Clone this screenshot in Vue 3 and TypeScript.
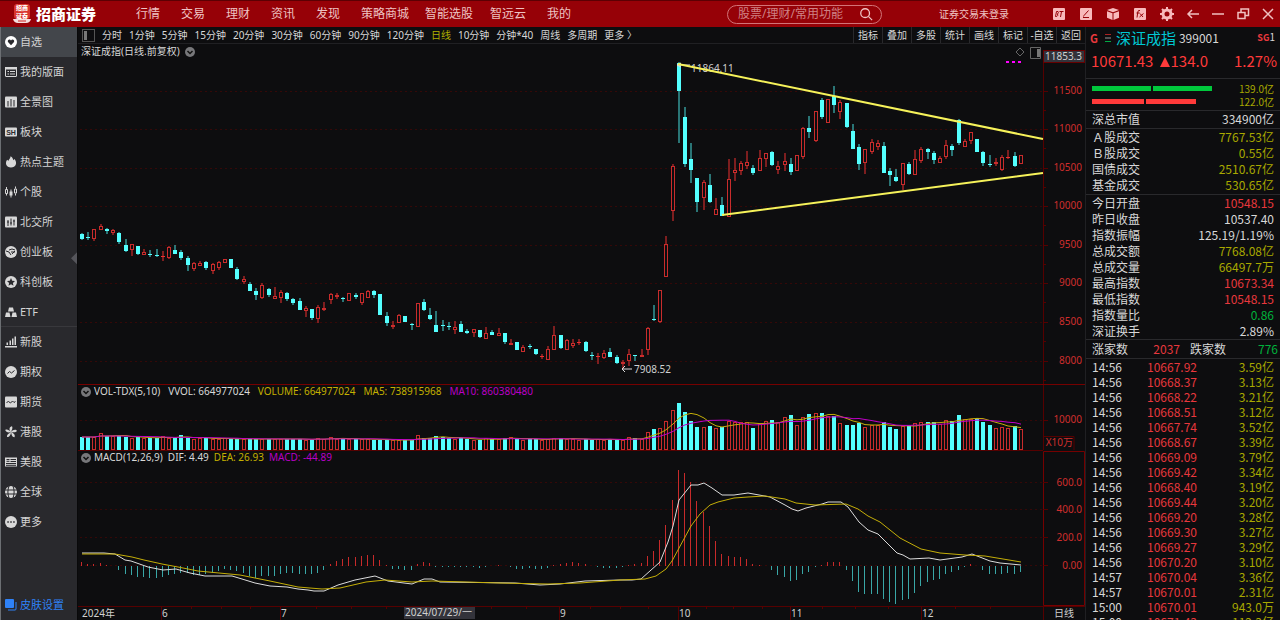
<script setup lang="ts">
type Candle = [up: number, high: number, top: number, bottom: number, low: number]
type Point = [number, number]
interface Shape { d: string; k: 'f' | 'd' | 's' | 'c' }
interface Icon { shapes: Shape[]; text?: string }

const nav = ['行情', '交易', '理财', '资讯', '发现', '策略商城', '智能选股', '智远云', '我的']
const periods = ['分时', '1分钟', '5分钟', '15分钟', '20分钟', '30分钟', '60分钟', '90分钟', '120分钟', '日线', '10分钟', '分钟*40', '周线', '多周期', '更多 〉']
const tools = ['指标', '叠加', '多股', '统计', '画线', '标记', '-自选', '返回']

const disc = 'M6 0a6 6 0 1 0 0 12a6 6 0 1 0 0-12z'
const box = 'M1 .5h10q1 0 1 1v9q0 1-1 1H1q-1 0-1-1v-9q0-1 1-1z'
const icons: Record<string, Icon> = {
  heart: { shapes: [{ d: disc, k: 'f' }, { d: 'M6 9.2L3 6.1C2 4.2 4.6 2.6 6 4.4C7.400 2.6 10 4.2 9 6.1z', k: 'd' }] },
  panel: { shapes: [{ d: 'M1 1.500h10q.5 0 .5.5v8q0 .5-.5.5H1q-.5 0-.5-.5V2q0-.5.5-.5z', k: 's' }, { d: 'M0 1h12v2.500H0z', k: 'f' }, { d: 'M2.500 5.500h1.500M5 5.500h5M2.500 8h1.500M5 8h5', k: 's' }] },
  bars: { shapes: [{ d: box, k: 'f' }, { d: 'M3 5v5.500M6 3v7.500M9 4v6.500', k: 'c' }] },
  sh: { shapes: [{ d: 'M1 1.500h10q1 0 1 1v7q0 1-1 1H1q-1 0-1-1v-7q0-1 1-1z', k: 'f' }], text: 'SH' },
  flame: { shapes: [{ d: 'M5.600.2C8 1.600 8 3.200 8.300 4.200L9.400 3C11.200 5 11.300 7 10.800 8.500C9.800 12.500 2.200 12.500 1.200 8.500C.6 6.500 1.500 4.600 2.300 3.800L3.300 5C3.500 3.500 5.500 2.500 5.600.2z', k: 'f' }] },
  candle: { shapes: [{ d: 'M1.500 1v2M.5 3.500h2v4h-2zM1.500 8v1.500M10.500.5v2M9.500 3h2v4h-2zM10.500 7.500v2M6 3.500v8', k: 's' }, { d: 'M4.500 5.500h3v4h-3z', k: 'f' }] },
  north: { shapes: [{ d: box, k: 'f' }, { d: 'M3 4v6M6 2.500v7M9 3.500v6M2 6h2M5 7h2M8 5h2', k: 'c' }] },
  growth: { shapes: [{ d: disc, k: 'f' }, { d: 'M1 5l3 1 2 3M4 4l3-1 3 1M6 6h4M7 8l3-3', k: 'c' }] },
  star: { shapes: [{ d: disc, k: 'f' }, { d: 'M6 2l1.200 2.700 2.800.3-2.100 1.900.6 2.900L6 8.300 3.500 9.800l.6-2.900L2 5l2.800-.3z', k: 'd' }] },
  etf: { shapes: [{ d: 'M4 1.500h4l1 4H3zM1 6.500h3.500l1 4.500H0zM7.500 6.500H11l1 4.500H6.500z', k: 'f' }] },
  chart: { shapes: [{ d: 'M0 10h12v1.500H0zM1.500 6.500H3V9H1.500zM4.500 4.500H6V9H4.500zM7 2.500h1.500V9H7zM9.500.5H11V9H9.500z', k: 'f' }] },
  option: { shapes: [{ d: disc, k: 'f' }, { d: 'M2.500 7.500l2-2 2 1.500 3-2.500', k: 'c' }] },
  future: { shapes: [{ d: box, k: 'f' }, { d: 'M1.500 6.500l2-1 2 1.500 2-2 1.500 1.500 1.500-1', k: 'c' }] },
  flower: { shapes: [{ d: 'M6 6C3.500 3.500 4.500.5 7 .2C8 2 7 3.500 6 6C8 3.500 11 3 12 5C10.500 6.800 8.500 6.200 6 6C9 7 10.500 9.500 9.500 11.200C7 11 6.500 8.500 6 6C6 9 4 11.500 2 11C1.500 9 3.500 7.500 6 6C3 7 1 6 .2 4C2 2.800 4 4 6 6z', k: 'f' }] },
  flag: { shapes: [{ d: 'M0 1.500h12v9H0z', k: 'f' }, { d: 'M5.500 3.500H11M5.500 5.500H11M1 7.500h10M1 9.300h10M1.500 3.500h3M1.500 5.300h3', k: 'c' }] },
  globe: { shapes: [{ d: disc, k: 'f' }, { d: 'M0 4h12M0 8h12M4 0C2.500 4 2.500 8 4 12M8 0C9.500 4 9.500 8 8 12', k: 'c' }] },
  more: { shapes: [{ d: disc, k: 'f' }, { d: 'M2.300 5.300h1.500v1.500H2.300zM5.250 5.300h1.500v1.500h-1.500zM8.200 5.300h1.500v1.500H8.200z', k: 'd' }] },
}
const side: [string, string][] = [
  ['自选', 'heart'], ['我的版面', 'panel'], ['全景图', 'bars'], ['板块', 'sh'], ['热点主题', 'flame'], ['个股', 'candle'],
  ['北交所', 'north'], ['创业板', 'growth'], ['科创板', 'star'], ['ETF', 'etf'], ['新股', 'chart'], ['期权', 'option'],
  ['期货', 'future'], ['港股', 'flower'], ['美股', 'flag'], ['全球', 'globe'], ['更多', 'more'],
]

const candles: Candle[] = [
  [0,233,234,239,240],[0,232,237,238,240],[1,229,229,239,241],[1,224,226,230,230],[0,228,229,231,234],[1,229,230,233,235],[0,232,233,242,244],[0,239,245,251,252],
  [1,244,244,250,256],[0,246,246,254,255],[1,249,252,255,255],[0,250,254,255,257],[0,249,255,256,257],[1,251,256,257,261],[1,246,247,258,259],[0,245,250,254,254],
  [0,250,252,258,260],[0,256,258,265,271],[1,262,263,269,271],[1,261,263,266,266],[0,261,262,268,270],[1,263,264,271,274],[1,261,262,268,270],[1,259,259,263,263],
  [0,259,259,268,268],[0,267,269,279,280],[1,276,279,282,284],[0,282,284,291,291],[0,288,291,295,300],[1,283,285,298,299],[0,288,289,295,297],[1,287,296,299,299],
  [1,290,292,298,303],[0,292,293,299,301],[0,298,299,303,305],[0,298,301,310,310],[1,306,308,311,317],[0,309,309,318,320],[1,305,307,319,323],[1,302,308,310,311],
  [1,293,294,300,304],[1,293,295,297,299],[0,297,298,299,302],[1,293,293,301,301],[0,293,295,297,299],[1,293,293,303,305],[1,290,291,298,298],[0,290,291,295,298],
  [0,294,294,315,315],[0,312,316,323,326],[1,321,325,327,329],[1,314,315,323,323],[0,316,316,322,322],[0,323,324,325,330],[1,303,303,327,327],[0,299,302,310,311],
  [0,308,315,319,320],[0,311,325,332,332],[0,320,325,326,331],[0,322,326,327,330],[1,321,327,330,334],[0,321,324,332,332],[0,329,331,333,334],[1,329,329,333,337],
  [0,330,330,337,338],[1,327,333,339,339],[0,330,332,335,335],[1,328,333,336,336],[0,333,333,342,344],[1,339,343,345,345],[0,342,342,350,350],[1,345,347,352,352],
  [0,344,346,347,349],[0,349,349,354,355],[1,354,356,357,359],[1,346,349,360,360],[1,326,335,350,350],[0,335,335,348,349],[1,339,340,350,350],[1,339,343,346,348],
  [1,339,342,343,345],[0,341,342,351,352],[0,352,355,356,360],[1,353,356,357,364],[1,350,353,358,359],[0,348,352,357,357],[0,355,357,363,364],[1,360,362,364,369],
  [1,349,354,361,366],[0,355,355,356,361],[1,349,355,357,357],[1,327,328,350,355],[0,305,319,320,321],[1,290,290,322,323],[1,236,244,277,277],[1,164,166,211,221],
  [0,62,63,91,143],[0,107,117,164,167],[0,143,159,170,183],[0,178,178,202,212],[1,180,182,198,210],[0,174,185,202,203],[1,198,209,215,215],[0,197,205,216,216],
  [1,159,179,217,217],[1,158,170,173,181],[1,161,163,171,175],[1,151,162,166,169],[0,165,168,173,175],[1,150,158,171,171],[1,153,153,159,167],[0,151,152,165,166],
  [1,161,166,170,174],[1,153,161,165,171],[0,158,164,172,175],[1,155,155,171,171],[1,127,128,157,159],[0,116,128,132,138],[1,111,111,141,142],[0,98,100,117,119],
  [1,99,99,123,123],[0,86,96,105,113],[1,100,102,112,119],[0,103,103,127,128],[0,124,131,149,149],[0,144,147,164,170],[1,149,149,163,174],[1,139,142,152,154],
  [1,140,143,147,150],[0,142,146,173,173],[0,168,171,175,186],[0,169,177,181,182],[1,163,163,185,190],[0,162,164,174,175],[1,150,159,175,175],[1,147,149,161,163],
  [0,148,149,152,159],[0,151,153,160,164],[1,156,158,163,163],[1,140,145,157,159],[0,144,146,150,156],[0,119,120,143,145],[1,139,141,147,147],[1,132,132,141,144],
  [0,139,139,152,152],[0,151,152,163,166],[0,155,164,165,167],[1,158,162,164,166],[1,155,157,170,171],[1,150,157,158,159],[0,152,156,166,167],[1,155,155,164,164],
]
const volumes: number[] = [
  13,13,13,17,14,14,14,13,12,13,12,12,12,14,12,12,15,12,11,12,12,11,11,12,11,11,11,11,11,11,11,11,11,11,11,11,10,10,12,11,
  13,11,11,11,11,11,11,10,10,10,10,10,10,10,15,12,12,14,13,12,11,12,11,10,10,12,11,11,12,13,11,10,11,11,10,11,12,12,11,11,
  10,11,10,11,10,11,10,10,13,12,11,18,21,22,29,40,47,38,29,23,23,24,22,23,29,28,28,28,22,26,29,30,28,33,35,25,33,36,37,37,
  34,34,27,25,25,27,23,25,25,28,23,21,24,25,27,28,28,28,26,30,29,35,31,31,32,28,25,22,23,22,24,21,
]
const macd: number[] = [
  4,2,2,3,1,0,-4,-8,-9,-11,-11,-12,-12,-11,-9,-8,-7,-7,-9,-9,-8,-7,-5,-3,-4,-5,-7,-10,-12,-10,-10,-10,-8,-7,-7,-8,-8,-8,-7,-4,
  2,5,7,9,9,10,11,11,6,1,-3,-3,-4,-4,2,4,3,-1,-1,-1,-1,-1,-1,-1,-2,-1,0,1,0,-1,-3,-3,-2,-3,-3,-2,1,2,3,4,
  3,2,0,-1,-2,-2,-2,-1,1,2,3,10,15,26,41,66,96,93,84,65,54,40,25,12,10,9,9,7,2,1,0,-4,-9,-11,-15,-14,-8,-6,-1,1,
  4,4,4,-4,-15,-26,-28,-28,-28,-33,-36,-38,-34,-33,-27,-20,-16,-14,-13,-8,-6,-4,-1,2,0,-4,-8,-8,-8,-7,-8,-6,
]
const dif: Point[] = [[82,553],[104,553],[115,554],[125,560],[131,561],[148,567],[163,570],[176,569],[190,573],[205,576],[232,576],[242,579],[255,583],[270,586],[287,587],[298,589],[308,590],[314,591],[324,591],[338,585],[355,580],[375,576],[388,581],[412,584],[424,579],[432,579],[440,582],[515,583],[540,585],[560,584],[585,581],[620,580],[632,580],[641,579],[660,562],[668,542],[673,526],[679,500],[691,485],[698,485],[704,483],[712,488],[722,495],[734,495],[748,493],[770,497],[785,505],[792,509],[798,511],[806,508],[822,504],[828,502],[841,502],[848,507],[859,522],[868,530],[878,534],[897,553],[903,555],[910,559],[929,558],[940,560],[962,557],[972,554],[990,561],[1000,563],[1021,565]]
const dea: Point[] = [[82,554],[115,554],[132,557],[144,560],[162,564],[178,567],[198,571],[240,575],[270,581],[298,587],[322,589],[340,588],[366,582],[385,580],[412,582],[432,581],[500,583],[548,584],[580,583],[620,580],[645,579],[656,576],[666,569],[672,561],[691,526],[700,514],[710,505],[718,502],[734,498],[748,497],[765,496],[785,499],[796,503],[815,505],[846,504],[858,509],[868,516],[880,522],[900,538],[921,549],[940,553],[965,555],[985,556],[1003,559],[1021,562]]

const cx = (i: number): number => Math.round(82 + i * 6.217)
const line = (p: Point[]): string => p.map((q) => q.join(',')).join(' ')
const average = (n: number): string =>
  volumes.map((_, i) => {
    const part = volumes.slice(Math.max(0, i - n + 1), i + 1)
    return `${cx(i)},${(450 - part.reduce((a, b) => a + b, 0) / part.length).toFixed(1)}`
  }).join(' ')
const ma5 = average(5)
const ma10 = average(10)

const priceAxis: [string, number][] = [['11500', 91], ['11000', 129], ['10500', 168], ['10000', 206], ['9500', 245], ['9000', 283], ['8500', 322], ['8000', 361]]
const macdAxis: [string, number][] = [['600.0', 482], ['400.0', 509], ['200.0', 537], ['0.00', 565]]
const months: [string, number][] = [['6', 161], ['7', 280], ['9', 559], ['10', 678], ['11', 790], ['12', 921]]
const weekTicks = [191, 221, 250, 316, 351, 386, 491, 526, 590, 620, 648, 706, 733, 762, 822, 855, 888, 955, 990]

const groups: [string, string, string][][] = [
  [['深总市值', '334900亿', 'white']],
  [['Ａ股成交', '7767.53亿', 'yellow'], ['Ｂ股成交', '0.55亿', 'yellow'], ['国债成交', '2510.67亿', 'yellow'], ['基金成交', '530.65亿', 'yellow']],
  [['今日开盘', '10548.15', 'red'], ['昨日收盘', '10537.40', 'white'], ['指数振幅', '125.19/1.19%', 'white'], ['总成交额', '7768.08亿', 'yellow'], ['总成交量', '66497.7万', 'yellow'], ['最高指数', '10673.34', 'red'], ['最低指数', '10548.15', 'red'], ['指数量比', '0.86', 'green'], ['深证换手', '2.89%', 'white']],
]
const ticks: [string, string, string][] = [
  ['14:56', '10667.92', '3.59亿'], ['14:56', '10668.37', '3.13亿'], ['14:56', '10668.22', '3.21亿'], ['14:56', '10668.51', '3.12亿'],
  ['14:56', '10667.74', '3.52亿'], ['14:56', '10668.67', '3.39亿'], ['14:56', '10669.09', '3.79亿'], ['14:56', '10669.42', '3.34亿'],
  ['14:56', '10668.40', '3.19亿'], ['14:56', '10669.44', '3.20亿'], ['14:56', '10669.20', '3.28亿'], ['14:56', '10669.30', '3.27亿'],
  ['14:56', '10669.27', '3.29亿'], ['14:56', '10670.20', '3.10亿'], ['14:57', '10670.04', '3.36亿'], ['14:57', '10670.01', '2.31亿'],
  ['15:00', '10670.01', '943.0万'], ['15:00', '10671.43', '112.3亿'],
]
</script>

<template>
  <div class="app">
    <header class="top">
      <svg class="logo" viewBox="0 0 18 20" aria-hidden="true">
        <rect x="1" y="0" width="16" height="15" rx="3" fill="#d8352f" />
        <text x="9" y="6" class="seal">招商</text>
        <text x="9" y="14" class="seal">证券</text>
        <path d="M0 15h18q-1 4-5 4H5q-4 0-5-4z" fill="#f4dede" />
        <path d="M5 17h8" stroke="#c22" />
      </svg>
      <strong class="brand">招商证券</strong>
      <nav class="nav"><a v-for="n in nav" :key="n" href="#">{{ n }}</a></nav>
      <label class="search">
        <input type="text" placeholder="股票/理财/常用功能" aria-label="搜索" />
        <svg viewBox="0 0 16 16"><circle cx="7" cy="7" r="5" /><path d="M11 11l4 4" /></svg>
      </label>
      <a class="login" href="#">证券交易未登录</a>
      <div class="actions">
        <button type="button" aria-label="BT"><svg viewBox="0 0 14 14"><rect class="pf" x="1" y="1" width="12" height="12" rx="1" /><path class="rs" d="M3.500 9.500l1-5h1.500q1 1-.5 2.500q1 1.500-.8 2.500zM7.500 4.500h4M9.500 4.500l-1 5.500" /></svg></button>
        <button type="button" aria-label="编辑"><svg viewBox="0 0 14 14"><rect class="pf" x="1" y="1" width="12" height="12" rx="1" /><path class="rs" d="M5 8.500L9.500 3.500M4 10.500h6M5 8.500l-.5 1" /></svg></button>
        <button type="button" aria-label="产品"><svg viewBox="0 0 14 14"><path class="pf" d="M7 1l6 2-6 2.200L1 3zM1 4.300l5.500 2V13L1 10.700zM13 4.300l-5.500 2V13l5.500-2.300z" /></svg></button>
        <button type="button" aria-label="公式"><svg viewBox="0 0 14 14"><rect class="pf" x="1" y="1" width="12" height="12" rx="1" /><path class="rs" d="M7 3.500q-2-.5-2.200 1.500L4 10.500M3.500 6h3M7 6.500l3 3.500M10.500 6.500L6.500 10" /></svg></button>
        <button type="button" aria-label="设置"><svg viewBox="0 0 14 14"><circle cx="7" cy="7" r="4" class="gear" /><path class="teeth" d="M7 0v2M7 12v2M0 7h2M12 7h2M2 2l1.500 1.500M10.500 10.500L12 12M12 2l-1.500 1.500M3.500 10.500L2 12" /></svg></button>
        <button type="button" class="win" aria-label="后退"><svg viewBox="0 0 14 14"><path class="ps" d="M13 7H2M6 3L2 7l4 4" /></svg></button>
        <button type="button" class="win" aria-label="最小化"><svg viewBox="0 0 14 14"><path class="ps" d="M1 7h12" /></svg></button>
        <button type="button" class="win" aria-label="还原"><svg viewBox="0 0 14 14"><path class="ps" d="M2 5.500h7v6H2zM5 5.500V2h7.500v6.500H9" /></svg></button>
        <button type="button" class="win" aria-label="关闭"><svg viewBox="0 0 14 14"><path class="ps" d="M2 2l10 10M12 2L2 12" /></svg></button>
      </div>
    </header>

    <div class="body">
      <aside class="side">
        <a v-for="([name, icon], i) in side" :key="name" href="#" :class="{ active: i === 0, split: i === 9 }">
          <svg viewBox="0 0 12 12" aria-hidden="true">
            <path v-for="(s, j) in icons[icon].shapes" :key="j" :d="s.d" :class="s.k" />
            <text v-if="icons[icon].text" x="6" y="9">{{ icons[icon].text }}</text>
          </svg>{{ name }}
        </a>
        <a class="skin" href="#">
          <svg viewBox="0 0 12 12" aria-hidden="true"><rect x="0" y="0" width="9" height="9" rx="1" fill="#2f82f7" /><path d="M11 3v7q0 1-1 1H3" fill="none" stroke="#2f82f7" /></svg>皮肤设置
        </a>
        <button class="fold" type="button" aria-label="收起"></button>
      </aside>

      <main class="main">
        <div class="bar">
          <button class="dock" type="button" aria-label="侧栏"><i></i></button>
          <div class="periods"><button v-for="p in periods" :key="p" type="button" :class="{ on: p === '日线' }">{{ p }}</button></div>
          <div class="tools"><button v-for="t in tools" :key="t" type="button">{{ t }}</button></div>
        </div>

        <section class="pane">
          <h2 class="legend">深证成指(日线.前复权)<svg class="drop" viewBox="0 0 10 10"><circle cx="5" cy="5" r="5" /><path d="M2.500 4L5 6.500 7.500 4" /></svg></h2>
          <svg class="plot" viewBox="78 44 1007 340" role="img" aria-label="日线">
            <path v-for="[t, y] in priceAxis" :key="t" class="grid" :d="`M80 ${y}.5H1043`" />
            <path class="axis" d="M1043.500 50V384" />
            <template v-for="[t, y] in priceAxis" :key="t">
              <path class="axis" :d="`M1043 ${y}.5h5M1043 ${y + 19}.5h3`" />
              <text class="red-label" x="1082" :y="y + 3">{{ t }}</text>
            </template>
            <g v-for="(c, i) in candles" :key="i" :class="c[0] ? 'up' : 'down'">
              <rect class="wick" :x="cx(i) - 0.5" :y="c[1]" width="1" :height="c[2] - c[1]" />
              <rect class="wick" :x="cx(i) - 0.5" :y="c[3]" width="1" :height="c[4] - c[3]" />
              <rect v-if="c[0] && c[3] - c[2] > 1" class="hollow" :x="cx(i) - 1.5" :y="c[2] + 0.5" width="3" :height="c[3] - c[2] - 1" />
              <rect v-else class="solid" :x="cx(i) - 2" :y="c[2]" width="4" :height="c[3] - c[2]" />
            </g>
            <path class="mark" d="M677 65h13M677 65l4-2M677 65l4 2M622 369h10M622 369l3-3M622 369l3 3" />
            <text class="note" x="691" y="72">11864.11</text>
            <text class="note" x="634" y="373">7908.52</text>
            <path class="trend" d="M678 64L1043 139M722 215L1043 173" />
            <path class="dots" d="M1006 61h3v2h-3zM1012 61h3v2h-3zM1018 61h3v2h-3z" />
            <path class="outline" d="M1020 48l4 4-4 4-4-4zM1030.500 47.500h10v11h-10z" />
            <rect x="1037" y="49" width="3" height="8" fill="#777" />
            <rect x="1043.500" y="50.500" width="41" height="12" fill="#33333b" stroke="#600" />
            <text class="note end" x="1082" y="60">11853.3</text>
          </svg>
        </section>

        <section class="pane">
          <h2 class="legend wide-gap"><svg class="drop" viewBox="0 0 10 10"><circle cx="5" cy="5" r="5" /><path d="M2.500 4L5 6.500 7.500 4" /></svg><span>VOL-TDX(5,10)</span><span>VVOL: 664977024</span><span class="gold">VOLUME: 664977024</span><span class="gold">MA5: 738915968</span><span class="purple">MA10: 860380480</span></h2>
          <svg class="plot" viewBox="78 384 1007 66" role="img" aria-label="成交量">
            <path class="rule" d="M78 384.500H1085" />
            <path class="grid" d="M80 420.500H1043" />
            <path class="axis" d="M1043.500 385V450M1043 420.500h5M1043 436.500h31V450" />
            <text class="red-label" x="1082" y="423">10000</text>
            <text class="red-label" x="1073" y="446">X10万</text>
            <g v-for="(v, i) in volumes" :key="i" :class="candles[i][0] ? 'up' : 'down'">
              <rect v-if="candles[i][0]" class="hollow" :x="cx(i) - 1.5" :y="450.5 - v" width="3" :height="v - 1" />
              <rect v-else class="solid" :x="cx(i) - 2" :y="450 - v" width="4" :height="v" />
            </g>
            <polyline class="yellow-line" :points="ma5" />
            <polyline class="purple-line" :points="ma10" />
          </svg>
        </section>

        <section class="pane">
          <h2 class="legend"><svg class="drop" viewBox="0 0 10 10"><circle cx="5" cy="5" r="5" /><path d="M2.500 4L5 6.500 7.500 4" /></svg><span>MACD(12,26,9)</span><span>DIF: 4.49</span><span class="gold">DEA: 26.93</span><span class="purple">MACD: -44.89</span></h2>
          <svg class="plot" viewBox="78 450 1007 156" role="img" aria-label="MACD">
            <path class="axis" d="M78 450.500H1043" />
            <path class="rule" d="M1043.500 451.500h41v154h-41z" />
            <template v-for="[t, y] in macdAxis" :key="t">
              <path class="grid" :d="`M80 ${y}.5H1043`" />
              <path class="axis" :d="`M1043 ${y}.5h5`" />
              <text class="red-label" x="1082" :y="y + 4">{{ t }}</text>
            </template>
            <rect v-for="(v, i) in macd" :key="i" :class="v > 0 ? 'hist-up' : 'hist-down'" :x="cx(i) - 1" :y="v > 0 ? 566 - v : 566" width="1" :height="Math.abs(v)" />
            <polyline class="white-line" :points="line(dif)" />
            <polyline class="yellow-line" :points="line(dea)" />
          </svg>
        </section>

        <svg class="plot" viewBox="78 606 1007 14" role="img" aria-label="日期">
          <path class="axis" d="M78 606.500H1085M1043.500 606v14" />
          <path v-for="x in weekTicks" :key="x" class="axis" :d="`M${x}.5 606v3`" />
          <text class="note" x="82" y="617">2024年</text>
          <template v-for="[m, x] in months" :key="m">
            <path class="axis" :d="`M${x}.5 606v14`" />
            <text class="note" :x="x + 1" y="617">{{ m }}</text>
          </template>
          <rect x="404" y="607" width="71" height="12" fill="#33333b" />
          <text class="note" x="405" y="616">2024/07/29/一</text>
          <text class="note" x="1054" y="617">日线</text>
        </svg>
      </main>

      <aside class="quote">
        <div class="name">
          <b>G</b>
          <svg viewBox="0 0 8 10" aria-hidden="true"><path d="M1 1.500h6" stroke="#a22" /><path d="M1 5h6" stroke="#999" /><path d="M1 8.500h6" stroke="#0a4" /></svg>
          <h1>深证成指</h1><span class="code">399001</span><span class="rank"><b>SG</b>1</span>
        </div>
        <div class="price"><span>10671.43</span><span class="change"><svg viewBox="0 0 10 10" aria-hidden="true"><path d="M5 0l5 10H0z" fill="#ff3a3a" /></svg>134.0</span><span>1.27%</span></div>
        <div class="flows">
          <div class="flow"><i class="g wide"></i><i class="g wide"></i><span>139.0亿</span></div>
          <div class="flow"><i class="r mid"></i><i class="r"></i><span>122.0亿</span></div>
        </div>
        <dl v-for="(g, i) in groups" :key="i">
          <div v-for="[k, v, c] in g" :key="k"><dt>{{ k }}</dt><dd :class="c">{{ v }}</dd></div>
        </dl>
        <div class="breadth"><span>涨家数</span><span class="red num">2037</span><span>跌家数</span><span class="green num">776</span></div>
        <table class="ticks">
          <tbody>
            <tr v-for="(t, i) in ticks" :key="i"><td>{{ t[0] }}</td><td class="red">{{ t[1] }}</td><td class="yellow">{{ t[2] }}</td></tr>
          </tbody>
        </table>
      </aside>
    </div>
  </div>
</template>

<style>
body { margin: 0; background: #0d0d0f; }
</style>

<style scoped>
.app { height: 100vh; overflow: hidden; display: flex; flex-direction: column; background: #0d0d0f; color: #d8d8d8; font-family: "Noto Sans", "Noto Sans CJK SC", sans-serif; font-size: 10px; line-height: 14px; }
.app * { box-sizing: border-box; }
a { color: inherit; text-decoration: none; }
button { font: inherit; color: inherit; background: none; border: 0; padding: 0; white-space: nowrap; }
h1, h2, dl, dd { margin: 0; font-weight: 400; }
.red { color: #e8383d; }
.green { color: #00b23c; }
.yellow { color: #a8a800; }
.white { color: #d8d8d8; }

.top { flex: none; height: 27px; display: flex; align-items: center; background: #960107; border-top: 1px solid #5c0003; color: #eec3c3; font-size: 12px; line-height: 16px; }
.logo { width: 18px; height: 20px; margin-left: 13px; }
.seal { font: 900 6px "Noto Sans CJK SC", sans-serif; fill: #fff; text-anchor: middle; }
.brand { width: 105px; padding-left: 5px; font-size: 15px; font-weight: 900; color: #fff; white-space: nowrap; }
.nav { display: grid; grid-template-columns: repeat(5, 45px) 64px 65px 57px auto; white-space: nowrap; }
.search { margin-left: auto; width: 155px; height: 19px; display: flex; align-items: center; border: 1px solid #d27478; border-radius: 10px; padding: 0 8px 0 10px; }
.search input { flex: 1; min-width: 0; border: 0; padding: 0; background: none; outline: 0; font: inherit; color: #fff; }
.search input::placeholder { color: #cf8084; opacity: 1; }
.search svg { width: 14px; height: 14px; fill: none; stroke: #f0c4c4; stroke-width: 1.5; }
.login { margin: 0 36px 0 57px; font-size: 10px; }
.actions { display: flex; height: 100%; }
.actions button { width: 27px; display: flex; align-items: center; justify-content: center; }
.actions .win { width: 25px; }
.actions svg { width: 14px; height: 14px; fill: none; }
.pf { fill: #f8b9bb; }
.rs { stroke: #960107; }
.ps { stroke: #f0c0c0; stroke-width: 1.500; }
.gear { stroke: #f8b9bb; stroke-width: 3; }
.teeth { stroke: #f8b9bb; stroke-width: 2; }

.body { flex: 1; min-height: 0; display: flex; }
.side { position: relative; flex: none; width: 78px; display: flex; flex-direction: column; background: #29292d; border-left: 1px solid #6c6f73; border-right: 1px solid #09090a; font-size: 11px; color: #d4d4d4; }
.side a { height: 30px; flex: none; display: flex; align-items: center; gap: 3px; padding-left: 4px; white-space: nowrap; }
.side a.active { background: #43464b; }
.side a.split { border-bottom: 1px solid #38383c; }
.side svg { width: 12px; height: 12px; flex: none; fill: none; }
.side .f { fill: #d8d8d8; }
.side .d { fill: #29292d; }
.side .s { stroke: #d8d8d8; }
.side .c { stroke: #29292d; }
.side text { font: 700 7px "Liberation Sans", sans-serif; fill: #29292d; text-anchor: middle; }
.side .skin { margin-top: auto; color: #2f82f7; }
.side .active .f { fill: #fff; }
.fold { position: absolute; right: 0; top: 38%; width: 6px; height: 12px; background: #55555b; clip-path: polygon(100% 0, 100% 100%, 0 50%); }

.main { flex: 1; min-width: 0; display: flex; flex-direction: column; }
.bar { flex: none; height: 17px; display: flex; align-items: center; border-bottom: 1px solid #202023; }
.dock { width: 13px; height: 13px; margin-left: 4px; border: 1px solid #555; padding: 1px; display: flex; }
.dock i { width: 3px; background: #777; }
.periods { display: flex; gap: 7px; margin-left: 7px; }
.periods .on { color: #b0b000; }
.tools { margin-left: auto; display: flex; height: 100%; }
.tools button { width: 29px; border-left: 1px solid #29292c; }
.pane { position: relative; }
.plot { display: block; width: 100%; }
.legend { position: absolute; left: 3px; top: 0; display: flex; align-items: center; gap: 5px; font-size: 10px; line-height: 15px; white-space: nowrap; }
.drop { width: 10px; height: 10px; fill: #77777a; }
.drop path { fill: none; stroke: #111; stroke-width: 1.500; }
.wide-gap { gap: 8px; }
.legend .drop { margin-right: -2px; }
.wide-gap .drop { margin-right: -5px; }
.gold { color: #c4b000; }
.purple { color: #b900c4; }
text { font-size: 10px; }
.note { fill: #d0d0d0; }
.end { text-anchor: end; }
.red-label { fill: #cf2d2d; text-anchor: end; }
.grid { stroke: #350808; stroke-dasharray: 2 3; }
.axis { fill: none; stroke: #560000; }
.rule { fill: none; stroke: #750000; }
.up .wick, .up .solid { fill: #ee3030; }
.down .wick { fill: #48dede; }
.down .solid { fill: #54ffff; }
.hollow { fill: none; stroke: #c92c2c; }
.mark { stroke: #ddd; fill: none; }
.trend { stroke: #f6f25a; stroke-width: 2; }
.dots { fill: #f0f; }
.outline { stroke: #666; fill: none; }
.hist-up { fill: #c72a2a; }
.hist-down { fill: #39a7a7; }
.yellow-line, .purple-line, .white-line { fill: none; stroke-width: 1; }
.yellow-line { stroke: #c4ae08; }
.purple-line { stroke: #c000c8; }
.white-line { stroke: #dcdcdc; }

.quote { flex: none; width: 195px; border-left: 1px solid #202023; font-family: "Noto Sans CJK SC", sans-serif; font-size: 12px; line-height: 16px; white-space: nowrap; }
.name { height: 21px; display: flex; align-items: center; padding: 0 5px 0 4px; }
.name b { color: #e8383d; font-size: 11px; }
.name svg { width: 8px; height: 10px; margin: 0 4px 0 6px; }
.name h1 { color: #00c8d4; font-size: 15px; line-height: 20px; }
.code { margin-left: 3px; }
.rank { margin-left: auto; font-size: 10px; }
.rank b { font-size: 9px; }
.price { height: 30px; display: flex; align-items: center; justify-content: space-between; padding: 0 3px 4px 5px; font-size: 15px; color: #ff3a3a; }
.change { margin-right: 20px; }
.change svg { width: 10px; height: 10px; margin-right: 1px; }
.flows { border-top: 1px solid #29292c; padding: 3px 6px 2px; }
.flow { display: flex; align-items: center; gap: 2px; height: 13px; }
.flow span { margin-left: auto; font-size: 10px; color: #a8a800; }
.flow i { width: 50px; height: 5px; }
.flow .wide { width: 59px; }
.flow .mid { width: 52px; }
.g { background: #00c83c; }
.r { background: #ff3a3a; }
dl { border-top: 1px solid #29292c; }
dl + dl { margin-top: 1px; }
dl div { display: flex; justify-content: space-between; padding: 0 6px; }
.breadth { border-top: 1px solid #29292c; border-bottom: 1px solid #29292c; height: 20px; line-height: 17px; padding: 0 2px 0 6px; display: grid; grid-template-columns: 36px 52px 46px 1fr; }
.num { text-align: right; }
.breadth span:nth-child(3) { padding-left: 10px; }
.ticks { width: 100%; table-layout: fixed; border-collapse: collapse; line-height: 15px; }
.ticks td { padding: 0; }
.ticks td:first-child { padding-left: 6px; width: 61px; }
.ticks td:last-child { text-align: right; padding-right: 6px; }
</style>
